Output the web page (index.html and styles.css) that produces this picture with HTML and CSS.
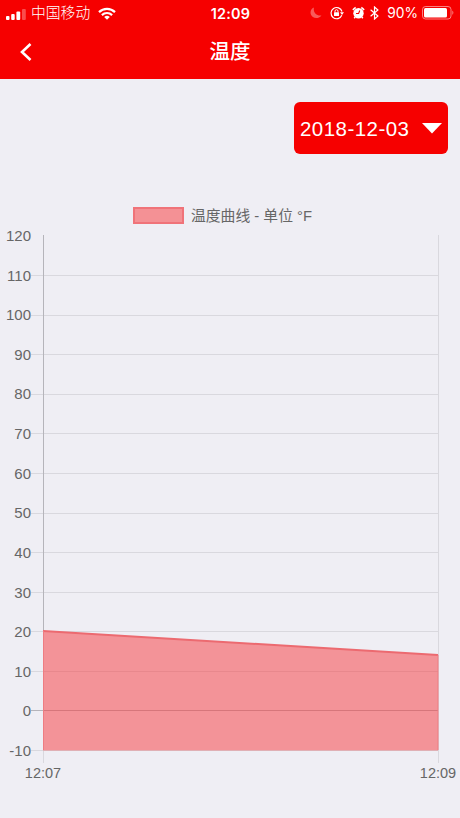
FILE: index.html
```html
<!DOCTYPE html>
<html lang="zh-CN">
<head>
  <meta charset="UTF-8" />
  <meta name="viewport" content="width=device-width, initial-scale=1.0" />
  <title>温度</title>
  <link rel="stylesheet" href="styles.css">
</head>
<body>
  <header class="header">
    <div class="status-bar">
      <div class="status-left">
        <svg class="signal" width="20" height="11" viewBox="0 0 20 11" fill="#fff">
          <rect x="0" y="7" width="3.5" height="4" rx="1" />
          <rect x="5.2" y="5" width="3.5" height="6" rx="1" />
          <rect x="10.4" y="2.5" width="3.8" height="8.5" rx="1" />
          <rect x="16" y="0" width="3.8" height="11" rx="1" opacity=".3" />
        </svg>
        <span class="carrier">中国移动</span>
        <svg class="wifi" width="18" height="13" viewBox="0 0 18 13" fill="none" stroke="#fff" stroke-width="2.2">
          <path d="M1 5.1C5.5.7 12.5.7 17 5.1" />
          <path d="M3.9 8.1C6.8 5.3 11.2 5.3 14.1 8.1" />
          <path d="M9 12.700L6.2 9.900Q9 7.600 11.8 9.900Z" fill="#fff" stroke="none" />
        </svg>
      </div>
      <span class="clock">12:09</span>
      <div class="status-right">
        <svg class="moon" width="12" height="12" viewBox="0 0 12 12" fill="#fff" opacity=".35">
          <path d="M4 .5C1 1.7 0 4.5.8 7.2C2 11 7.5 13 11.5 8.5C6.5 9.3 2.8 5.5 4 .5Z" />
        </svg>
        <svg class="rotation" width="14" height="14" viewBox="0 0 14 14" fill="none" stroke="#fff">
          <path d="M11.8 9.3A5.6 5.6 0 1 1 12 5.5" stroke-width="1.2" />
          <path d="M9.9 6.2H14L12 8.9Z" fill="#fff" stroke="none" />
          <rect x="4" y="6.2" width="5" height="3.8" rx=".5" fill="#fff" stroke="none" />
          <path d="M5 6.5V5.2a1.5 1.5 0 0 1 3 0v1.3" />
        </svg>
        <svg class="alarm" width="13" height="14" viewBox="0 0 13 14" fill="none">
          <circle cx="6.5" cy="7.2" r="5.2" fill="#fff" />
          <path d="M.9 4A8 8 0 0 1 3.7 1.5M9.3 1.5A8 8 0 0 1 12.1 4M3.2 11L2.2 12.300M9.8 11L10.8 12.300" stroke="#fff" stroke-width="1.5" />
          <path d="M7.8 4.500L6.6 7.500H4" stroke="#f60000" stroke-width="1.1" />
        </svg>
        <svg class="bluetooth" width="9" height="14" viewBox="0 0 9 14" fill="none" stroke="#fff" stroke-width="1.2">
          <path d="M.6 3.800L7.9 10L4.5 13V1L7.9 4L.6 10.200" />
        </svg>
        <span class="percent">90%</span>
        <svg class="battery" width="33" height="14" viewBox="0 0 33 14">
          <rect x=".5" y=".5" width="28.500" height="12.500" rx="3" fill="none" stroke="#fff" stroke-opacity=".5" />
          <rect x="2" y="2" width="23" height="9.500" rx="1.500" fill="#fff" />
          <path d="M30.3 4.500Q32.5 6.700 30.3 9Z" fill="#fff" opacity=".5" />
        </svg>
      </div>
    </div>
    <nav class="nav-bar">
      <svg class="back" width="12" height="18" viewBox="0 0 12 18" fill="none" stroke="#fff" stroke-width="2.600">
        <path d="M10.5 1L2 9L10.5 17" />
      </svg>
      <h1>温度</h1>
    </nav>
  </header>

  <main>
    <div class="toolbar">
      <button class="date-picker">
        <span>2018-12-03</span>
        <svg width="20" height="11" viewBox="0 0 20 11"><path d="M0 0H20L10 10.500Z" fill="#fff" /></svg>
      </button>
    </div>
    <div class="legend">
      <span class="legend-box"></span>
      <span class="legend-label">温度曲线 - 单位 °F</span>
    </div>
    <svg class="chart" width="460" height="592" viewBox="0 226 460 592">
      <!-- horizontal grid -->
      <path class="grid" d="M31 275.500H438M31 315.500H438M31 354.500H438M31 394.500H438M31 433.500H438M31 473.500H438M31 513.500H438M31 552.500H438M31 592.500H438M31 631.500H438M31 671.500H438M31 750.500H438" />
      <path class="grid" d="M438.500 235V763M43.500 750V763" />
      <path class="axis" d="M43.500 235V750M31 710.500H438" />
      <!-- temperature area -->
      <path class="area" d="M43 631L438 655V750.500H43Z" />
      <path class="line" d="M43 631L438 655" />
      <path class="side" d="M43.500 631V750M438 655V750" />
      <g class="y-labels">
        <text x="31" y="241">120</text>
        <text x="31" y="280.500">110</text>
        <text x="31" y="320">100</text>
        <text x="31" y="359.500">90</text>
        <text x="31" y="399">80</text>
        <text x="31" y="439">70</text>
        <text x="31" y="478.500">60</text>
        <text x="31" y="518">50</text>
        <text x="31" y="557.500">40</text>
        <text x="31" y="597.500">30</text>
        <text x="31" y="637">20</text>
        <text x="31" y="676.500">10</text>
        <text x="31" y="716">0</text>
        <text x="31" y="755.500">-10</text>
      </g>
      <g class="x-labels">
        <text x="43" y="777.500">12:07</text>
        <text x="438" y="777.500">12:09</text>
      </g>
    </svg>
  </main>
</body>
</html>
```

FILE: styles.css
```css
* {
  box-sizing: border-box;
}
body {
  margin: 0;
  background: #efeef4;
  font-family: "Liberation Sans", "Noto Sans CJK SC", sans-serif;
  overflow: hidden;
}
svg {
  display: block;
  flex-shrink: 0;
}
.header {
  height: 79px;
  background: #f60000;
  color: #fff;
}
.status-bar {
  display: grid;
  grid-template-columns: 1fr auto 1fr;
  align-items: center;
  height: 25px;
  padding: 0 5px 0 6px;
}
.status-left,
.status-right {
  display: flex;
  align-items: center;
}
.status-right {
  justify-content: flex-end;
}
.signal {
  margin-top: 2px;
}
.carrier {
  margin: 0 8px 0 5px;
  padding-top: 1px;
  font-size: 14.8px;
  font-weight: 300;
  line-height: 25px;
}
.clock {
  font-family: Inter, sans-serif;
  font-size: 14.4px;
  font-weight: 600;
  letter-spacing: 0.2px;
  line-height: 25px;
}
.rotation {
  margin-left: 8px;
}
.alarm {
  margin-left: 8px;
}
.bluetooth {
  margin-left: 5px;
}
.percent {
  margin: 0 4px 0 8px;
  font-family: Inter, sans-serif;
  font-size: 13.8px;
  line-height: 25px;
}
.nav-bar {
  display: grid;
  grid-template-columns: 1fr auto 1fr;
  align-items: center;
  height: 54px;
}
.back {
  margin-left: 20px;
}
h1 {
  margin: 0;
  font-size: 20.5px;
  font-weight: 500;
  line-height: 54px;
}
.toolbar {
  display: flex;
  justify-content: flex-end;
  padding: 23px 12px 0 0;
}
.date-picker {
  display: flex;
  align-items: center;
  justify-content: space-between;
  width: 154px;
  height: 52px;
  padding: 0 6px;
  border: none;
  border-radius: 6px;
  background: #f60000;
  color: #fff;
  font-family: inherit;
  font-size: 20.5px;
  letter-spacing: 0.45px;
}
.date-picker span {
  padding-top: 1px;
}
.legend {
  display: flex;
  align-items: center;
  height: 24px;
  margin: 49px 0 -1px 133px;
}
.legend-box {
  width: 51px;
  height: 17px;
  margin-right: 7px;
  border: 2px solid #f07379;
  background: #f49195;
}
.legend-label {
  padding-top: 1px;
  color: #666;
  font-size: 14.8px;
  line-height: 24px;
}
.grid,
.axis,
.line,
.side {
  fill: none;
}
.grid {
  stroke: #d9d8de;
}
.axis {
  stroke: #b5b4ba;
}
.area {
  fill: rgba(248, 55, 60, 0.5);
}
.line {
  stroke: #ec6a70;
  stroke-width: 2;
}
.side {
  stroke: #ee7c82;
}
.y-labels,
.x-labels {
  fill: #666;
  font-size: 15px;
}
.y-labels {
  text-anchor: end;
}
.x-labels {
  font-size: 14.5px;
  text-anchor: middle;
}
```
